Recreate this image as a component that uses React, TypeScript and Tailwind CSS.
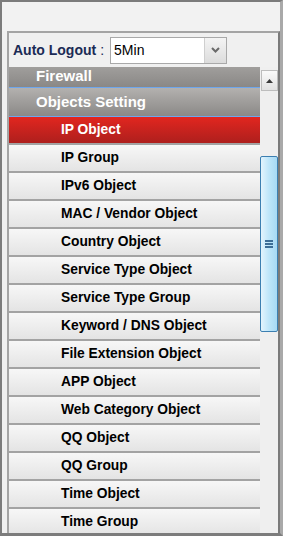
import React from "react";

const items = [
  "IP Group",
  "IPv6 Object",
  "MAC / Vendor Object",
  "Country Object",
  "Service Type Object",
  "Service Type Group",
  "Keyword / DNS Object",
  "File Extension Object",
  "APP Object",
  "Web Category Object",
  "QQ Object",
  "QQ Group",
  "Time Object",
  "Time Group",
];

export default function App() {
  return (
    <div
      className="w-[283px] h-[536px] overflow-hidden bg-[#f0f0f0] border-l-2 border-t-2 border-b-[3px] border-r-[3px] border-l-[#7c7c7c] border-t-[#7c7c7c] border-b-[#7c7c7c] border-r-[#a9a9a9] flex flex-col"
      style={{ fontFamily: '"Liberation Sans", Arial, sans-serif' }}
    >
      <div className="h-[29px] shrink-0 bg-[#f2f2f2]" />
      <div className="flex-1 min-h-0 ml-[5px] border-l-2 border-t-2 border-r-2 border-l-[#a4a4a4] border-t-[#a4a4a4] border-r-[#7a7a7a] flex flex-col">
        <div className="h-[34px] shrink-0 flex items-center pl-[4px] bg-[#f0f0f0]">
          <span className="text-[14px] font-bold text-[#1b2b55]">Auto Logout</span>
          <span className="text-[14px] text-[#1b2b55] ml-[4px]">:</span>
          <div className="ml-[6px] flex h-[27px] border border-[#a9a9a9]">
            <div className="w-[94px] bg-white flex items-center pl-[3px] text-[14px] text-black border-r border-[#cfcfcf]">
              5Min
            </div>
            <div className="w-[21px] bg-gradient-to-b from-[#f4f4f4] to-[#dcdcdc] flex items-center justify-center">
              <svg width="9" height="6" viewBox="0 0 9 6">
                <path d="M1 1 L4.5 4.5 L8 1" stroke="#6a6a6a" strokeWidth="2" fill="none" />
              </svg>
            </div>
          </div>
        </div>
        <div className="flex-1 min-h-0 flex">
          <div className="w-[251px] shrink-0 flex flex-col overflow-hidden">
            <div className="h-[21px] shrink-0 bg-gradient-to-b from-[#a09e9c] to-[#8a8886] border-b border-[#6ea6ec] flex items-start pl-[27px]">
              <span className="text-[15px] font-bold text-white leading-[16px] mt-[1px]">Firewall</span>
            </div>
            <div className="h-[29px] shrink-0 bg-gradient-to-b from-[#b3b1af] to-[#8b8987] border-b border-[#6ea6ec] flex items-center pl-[27px]">
              <span className="text-[15px] font-bold text-white">Objects Setting</span>
            </div>
            <div className="h-[26px] shrink-0 bg-gradient-to-b from-[#e2261f] to-[#ae1f1d] flex items-center pl-[52px] pt-[1px]">
              <span className="text-[13.8px] font-bold text-white">IP Object</span>
            </div>
            {items.map((t) => (
              <div
                key={t}
                className="h-[28px] shrink-0 border-t-2 border-[#a3a3a3] bg-gradient-to-b from-[#f7f7f7] to-[#e4e4e4] flex items-center pl-[52px] pt-[1px]"
              >
                <span className="text-[13.8px] font-bold text-black">{t}</span>
              </div>
            ))}
          </div>
          <div className="w-[18px] shrink-0 bg-[#efefef] flex flex-col pt-[3px]">
            <div className="h-[21px] w-[17px] ml-[1px] border border-[#bdbdbd] bg-gradient-to-b from-[#fafafa] to-[#e2e2e2] flex items-center justify-center">
              <svg width="7" height="4" viewBox="0 0 7 4">
                <path d="M0 4 L3.5 0 L7 4 Z" fill="#3a3a3a" />
              </svg>
            </div>
            <div className="h-[65px] shrink-0" />
            <div className="h-[176px] w-[18px] rounded-[2px] border border-[#3c7fb1] bg-gradient-to-r from-[#e3f4fd] via-[#bde5f9] to-[#a6d9f5] flex items-center justify-center">
              <div className="flex flex-col gap-[1px]">
                <div className="w-[8px] h-[2px] bg-[#3d6e97]" />
                <div className="w-[8px] h-[2px] bg-[#3d6e97]" />
                <div className="w-[8px] h-[2px] bg-[#3d6e97]" />
              </div>
            </div>
          </div>
        </div>
      </div>
    </div>
  );
}
